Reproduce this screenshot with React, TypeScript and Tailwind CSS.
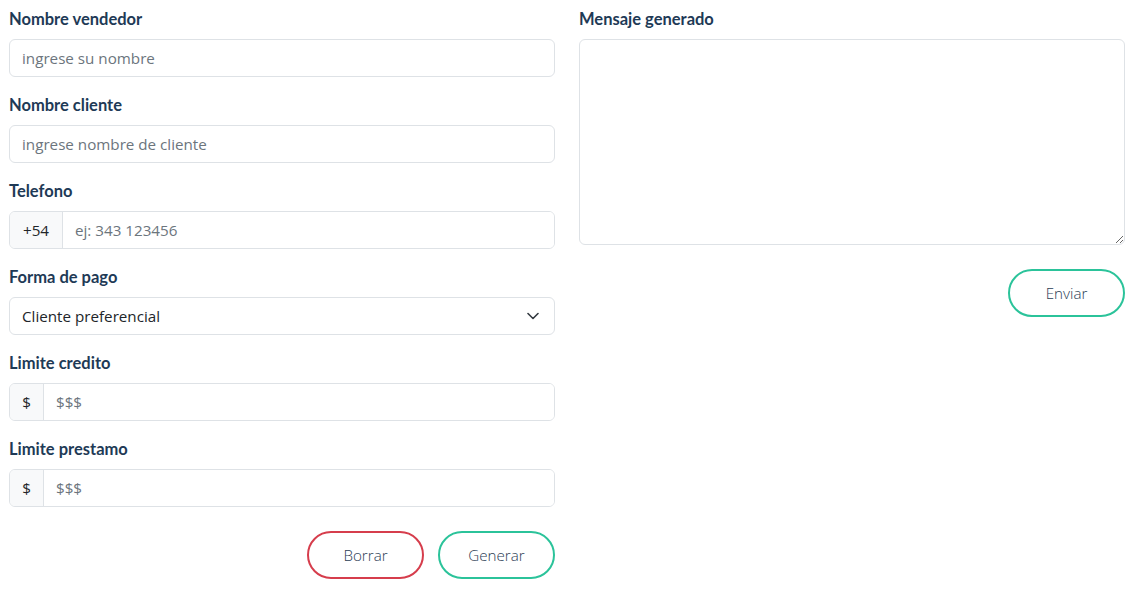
import React from "react";

const label = "block text-[16.5px] leading-6 font-bold text-[#1e3a56] mb-2 [font-family:Lato,'Noto_Sans',sans-serif]";
const font = "[font-family:'Open_Sans','Noto_Sans',sans-serif]";
const inputBase = `h-[38px] w-full rounded-md border border-[#dee2e6] bg-white px-3 text-[15.2px] text-[#212529] placeholder:text-[#6c757d] outline-none ${font}`;

function Addon({ prefix, placeholder, w }: { prefix: string; placeholder: string; w: string }) {
  return (
    <div className={`flex h-[38px] w-full rounded-md border border-[#dee2e6] overflow-hidden ${font}`}>
      <span className={`flex items-center justify-center ${w} bg-[#f8f9fa] border-r border-[#dee2e6] text-[15.2px] text-[#212529]`}>
        {prefix}
      </span>
      <input
        className="flex-1 min-w-0 px-3 text-[15.2px] text-[#212529] placeholder:text-[#6c757d] outline-none bg-white"
        placeholder={placeholder}
      />
    </div>
  );
}

function Pill({ text, color }: { text: string; color: string }) {
  return (
    <button
      className={`h-12 w-[117px] rounded-full border-2 ${color} bg-white text-[15.2px] font-light text-[#2b3d55] ${font}`}
    >
      {text}
    </button>
  );
}

export default function App() {
  return (
    <div className="flex gap-6 pl-[9px] pr-[21px] pt-[7px] bg-white min-h-[591px]">
      <div className="w-[546px] flex flex-col">
        <div className="mb-4">
          <label className={label}>Nombre vendedor</label>
          <input className={inputBase} placeholder="ingrese su nombre" />
        </div>
        <div className="mb-4">
          <label className={label}>Nombre cliente</label>
          <input className={inputBase} placeholder="ingrese nombre de cliente" />
        </div>
        <div className="mb-4">
          <label className={label}>Telefono</label>
          <Addon prefix="+54" placeholder="ej: 343 123456" w="w-[53px]" />
        </div>
        <div className="mb-4">
          <label className={label}>Forma de pago</label>
          <div className={`relative flex items-center h-[38px] w-full rounded-md border border-[#dee2e6] bg-white px-3 text-[15.2px] text-[#212529] ${font}`}>
            <span>Cliente preferencial</span>
            <svg className="absolute right-[15px] top-[14px]" width="12" height="8" viewBox="0 0 12 8" fill="none">
              <path d="M1 1.5l5 5 5-5" stroke="#343a40" strokeWidth="1.6" strokeLinecap="round" strokeLinejoin="round" />
            </svg>
          </div>
        </div>
        <div className="mb-4">
          <label className={label}>Limite credito</label>
          <Addon prefix="$" placeholder="$$$" w="w-[34px]" />
        </div>
        <div>
          <label className={label}>Limite prestamo</label>
          <Addon prefix="$" placeholder="$$$" w="w-[34px]" />
        </div>
        <div className="flex justify-end gap-[14px] mt-6">
          <Pill text="Borrar" color="border-[#d63d4c]" />
          <Pill text="Generar" color="border-[#2bc39a]" />
        </div>
      </div>
      <div className="w-[546px] flex flex-col">
        <label className={label}>Mensaje generado</label>
        <textarea className="h-[206px] w-full rounded-md border border-[#dee2e6] bg-white px-3 py-2 outline-none" />
        <div className="flex justify-end mt-6">
          <Pill text="Enviar" color="border-[#2bc39a]" />
        </div>
      </div>
    </div>
  );
}
